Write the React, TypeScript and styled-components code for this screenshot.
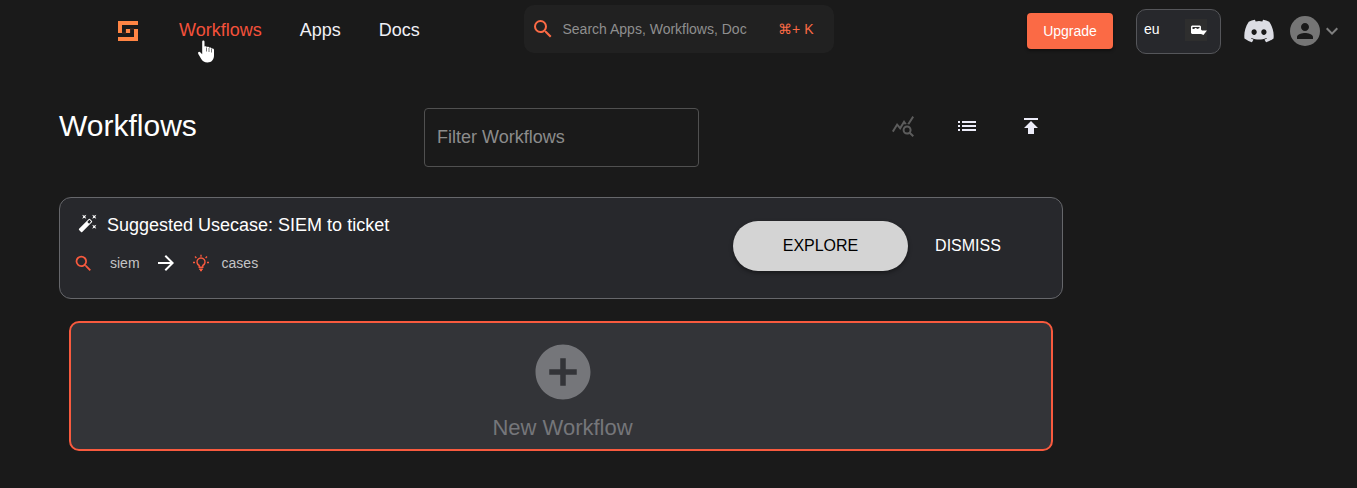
import React from "react";
import styled, { createGlobalStyle } from "styled-components";
import {
  MdAddCircle,
  MdArrowForward,
  MdAutoFixHigh,
  MdExpandMore,
  MdList,
  MdPerson,
  MdPublish,
  MdQueryStats,
  MdSearch,
} from "react-icons/md";
import { FaDiscord } from "react-icons/fa";

const orange = "#fb6a45";
const red = "#f85a3e";

const GlobalStyle = createGlobalStyle`
  * { box-sizing: border-box; }
  body {
    margin: 0;
    background: #1a1a1a;
    color: #fff;
    font-family: "Liberation Sans", Arial, sans-serif;
  }
  button, input, select { font: inherit; color: inherit; }
  button { border: 0; padding: 0; background: none; cursor: pointer; }
  svg { display: block; flex: none; }
`;

const Header = styled.header`
  display: grid;
  grid-template-columns: 1fr 310px 1fr;
  align-items: center;
  height: 62px;
`;

const Nav = styled.nav`
  display: flex;
  align-items: center;
  gap: 38px;
  padding-left: 118px;
`;

const NavLink = styled.a<{ $active?: boolean }>`
  position: relative;
  margin-bottom: 2px;
  font-size: 18px;
  line-height: 24px;
  color: ${(p) => (p.$active ? "#f4513a" : "#f0f0f6")};
  text-decoration: none;
`;

const Pointer = styled.svg`
  position: absolute;
  top: 22px;
  left: 18px;
`;

const SearchBox = styled.label`
  display: flex;
  align-items: center;
  height: 48px;
  margin-bottom: 4px;
  padding: 0 20px 0 7px;
  border-radius: 10px;
  background: #212121;
  color: ${orange};
  font-size: 14px;
`;

const SearchInput = styled.input`
  flex: 1;
  min-width: 0;
  margin: 0 24px 0 8px;
  padding: 0;
  border: 0;
  outline: 0;
  background: none;
  color: #fff;
  &::placeholder { color: #8f8f8f; opacity: 1; }
`;

const Account = styled.div`
  display: flex;
  align-items: center;
  justify-content: flex-end;
  padding-right: 13px;
`;

const UpgradeButton = styled.button`
  width: 86px;
  height: 36px;
  margin-right: 23px;
  border-radius: 4px;
  background: ${orange};
  box-shadow: 0 2px 3px rgba(0, 0, 0, 0.4);
  font-size: 14px;
`;

const Region = styled.div`
  position: relative;
  margin-right: 22px;
`;

const RegionSelect = styled.select`
  display: block;
  appearance: none;
  width: 85px;
  height: 45px;
  padding: 0 8px 5px 7px;
  border: 1px solid #55565a;
  border-radius: 10px;
  background: #27282c;
  font-size: 14px;
`;

const RegionIcon = styled.svg`
  position: absolute;
  top: 10px;
  right: 14px;
  pointer-events: none;
`;

const Discord = styled.a`
  margin-right: 15px;
  color: #dcdde4;
`;

const Profile = styled.button`
  display: flex;
  align-items: center;
  color: #808080;
`;

const Avatar = styled.span`
  display: grid;
  place-items: center;
  width: 30px;
  height: 30px;
  border-radius: 50%;
  background: #757575;
  color: #1a1a1a;
`;

const Main = styled.main`
  margin: 46px 294px 0 59px;
`;

const Toolbar = styled.div`
  display: grid;
  grid-template-columns: 365px 275px 1fr;
  align-items: start;
`;

const Title = styled.h1`
  margin: 0;
  font-size: 30px;
  line-height: 36px;
  font-weight: 400;
`;

const FilterInput = styled.input`
  height: 59px;
  padding: 0 12px;
  border: 1px solid #505050;
  border-radius: 4px;
  background: none;
  font-size: 18px;
  &::placeholder { color: #8c8c8c; opacity: 1; }
`;

const Actions = styled.div`
  display: flex;
  justify-content: flex-end;
`;

const IconButton = styled.button`
  display: grid;
  place-items: center;
  width: 64px;
  height: 36px;
  color: #ececf8;
  &:disabled { color: #5c5c5c; cursor: default; }
`;

const Usecase = styled.section`
  display: flex;
  align-items: center;
  height: 102px;
  margin-top: 30px;
  padding: 0 34px 4px 13px;
  border: 1px solid #66676b;
  border-radius: 12px;
  background: #27282c;
`;

const UsecaseText = styled.div`
  flex: 1;
  margin-bottom: 4px;
`;

const UsecaseTitle = styled.h2`
  display: flex;
  align-items: center;
  gap: 9px;
  margin: 0 0 14px;
  padding-left: 5px;
  font-size: 18px;
  line-height: 24px;
  font-weight: 400;
  svg { margin-bottom: 4px; }
`;

const Steps = styled.div`
  display: flex;
  align-items: center;
  gap: 14px;
  font-size: 14px;
  line-height: 24px;
`;

const Step = styled.span<{ $gap: number }>`
  display: flex;
  align-items: center;
  gap: ${(p) => p.$gap}px;
  color: #c4c4c6;
  svg { color: ${red}; }
`;

const ExploreButton = styled.button`
  width: 175px;
  height: 50px;
  border-radius: 25px;
  background: #d4d4d4;
  box-shadow: 0 2px 4px rgba(0, 0, 0, 0.4);
  color: #000;
  font-size: 16px;
`;

const DismissButton = styled.button`
  width: 120px;
  height: 50px;
  font-size: 16px;
`;

const NewWorkflow = styled.button`
  display: flex;
  flex-direction: column;
  align-items: center;
  gap: 8px;
  width: calc(100% - 20px);
  height: 130px;
  margin: 22px 10px 0;
  padding: 16px 0 0 3px;
  border: 2px solid ${red};
  border-radius: 10px;
  background: #333438;
  color: #75767a;
  font-size: 22px;
  line-height: 30px;
`;

const Logo = () => (
  <svg width="23" height="20" viewBox="0 0 23 20" fill="#ff8544" aria-hidden="true">
    <path d="M4 12h4V8M16 8h-4v4" fill="none" stroke="#5a3420" strokeWidth=".8" />
    <path d="M0 0h20v4H4v8H0zM8 8h4v4H8zM16 8h4v12H0v-4h16z" />
  </svg>
);

const Bulb = () => (
  <svg width="18" height="18" viewBox="0 0 18 18" fill="none" stroke="currentColor" strokeWidth="1.4" aria-hidden="true">
    <path d="M7.2 13.2v-1.7a4 4 0 1 1 3.6 0v1.7zM7.2 15.2h3.6M8 16.6h2M9 .8v1.9M1 8.5h2M15 8.5h2M3 2.6l1.4 1.4M15 2.6l-1.4 1.4" />
  </svg>
);

export default function App() {
  return (
    <>
      <GlobalStyle />
      <Header>
        <Nav>
          <Logo />
          <NavLink href="#workflows" $active>
            Workflows
            <Pointer width="20" height="24" viewBox="0 0 20 24" fill="#fff" aria-hidden="true">
              <path d="M5.2 1.6c0-1.5 2.3-1.5 2.3 0v5c.6-.7 2.1-.5 2.4.5.8-.7 2.2-.4 2.4.6 1-.7 2.4-.1 2.4 1.2.9-.7 2.3-.1 2.3 1.2v5.2c0 4.6-2.5 7.2-6.5 7.2-3.2 0-4.8-1.2-6.4-3.8L1.300 13.900c-.8-1.500.8-2.800 2.200-1.500l1.700 1.900z" />
              <path d="M9.500 7.500v4M12 8v4M14.500 9v3.500" stroke="#1a1a1a" strokeWidth=".6" />
            </Pointer>
          </NavLink>
          <NavLink href="#apps">Apps</NavLink>
          <NavLink href="#docs">Docs</NavLink>
        </Nav>
        <SearchBox>
          <MdSearch size={24} />
          <SearchInput placeholder="Search Apps, Workflows, Doc" aria-label="Search" />
          <span>⌘+ K</span>
        </SearchBox>
        <Account>
          <UpgradeButton>Upgrade</UpgradeButton>
          <Region>
            <RegionSelect aria-label="Region" defaultValue="eu">
              <option value="eu">eu</option>
            </RegionSelect>
            <RegionIcon width="22" height="22" viewBox="0 0 22 22" aria-hidden="true">
              <path d="M0 0h22v22H0z" fill="#2e2e2e" />
              <path
                d="M7 6.500h8l1 1v3l1 1h5l-2 2.500-1.500 2-2.500-1H7l-1-1V7.500zM7.500 8v2l1.500 0 1.500-1.200 2 1.200 2-1V8z"
                fill="#fff"
                fillRule="evenodd"
              />
            </RegionIcon>
          </Region>
          <Discord href="#discord" aria-label="Discord">
            <FaDiscord size={32} />
          </Discord>
          <Profile aria-label="Account">
            <Avatar>
              <MdPerson size={24} />
            </Avatar>
            <MdExpandMore size={24} />
          </Profile>
        </Account>
      </Header>
      <Main>
        <Toolbar>
          <Title>Workflows</Title>
          <FilterInput placeholder="Filter Workflows" aria-label="Filter Workflows" />
          <Actions>
            <IconButton disabled aria-label="Statistics">
              <MdQueryStats size={24} />
            </IconButton>
            <IconButton aria-label="List view">
              <MdList size={24} />
            </IconButton>
            <IconButton aria-label="Upload workflow">
              <MdPublish size={24} />
            </IconButton>
          </Actions>
        </Toolbar>
        <Usecase>
          <UsecaseText>
            <UsecaseTitle>
              <MdAutoFixHigh size={20} />
              Suggested Usecase: SIEM to ticket
            </UsecaseTitle>
            <Steps>
              <Step $gap={16}>
                <MdSearch size={21} />
                siem
              </Step>
              <MdArrowForward size={24} />
              <Step $gap={12}>
                <Bulb />
                cases
              </Step>
            </Steps>
          </UsecaseText>
          <ExploreButton>EXPLORE</ExploreButton>
          <DismissButton>DISMISS</DismissButton>
        </Usecase>
        <NewWorkflow>
          <MdAddCircle size={66} />
          New Workflow
        </NewWorkflow>
      </Main>
    </>
  );
}
